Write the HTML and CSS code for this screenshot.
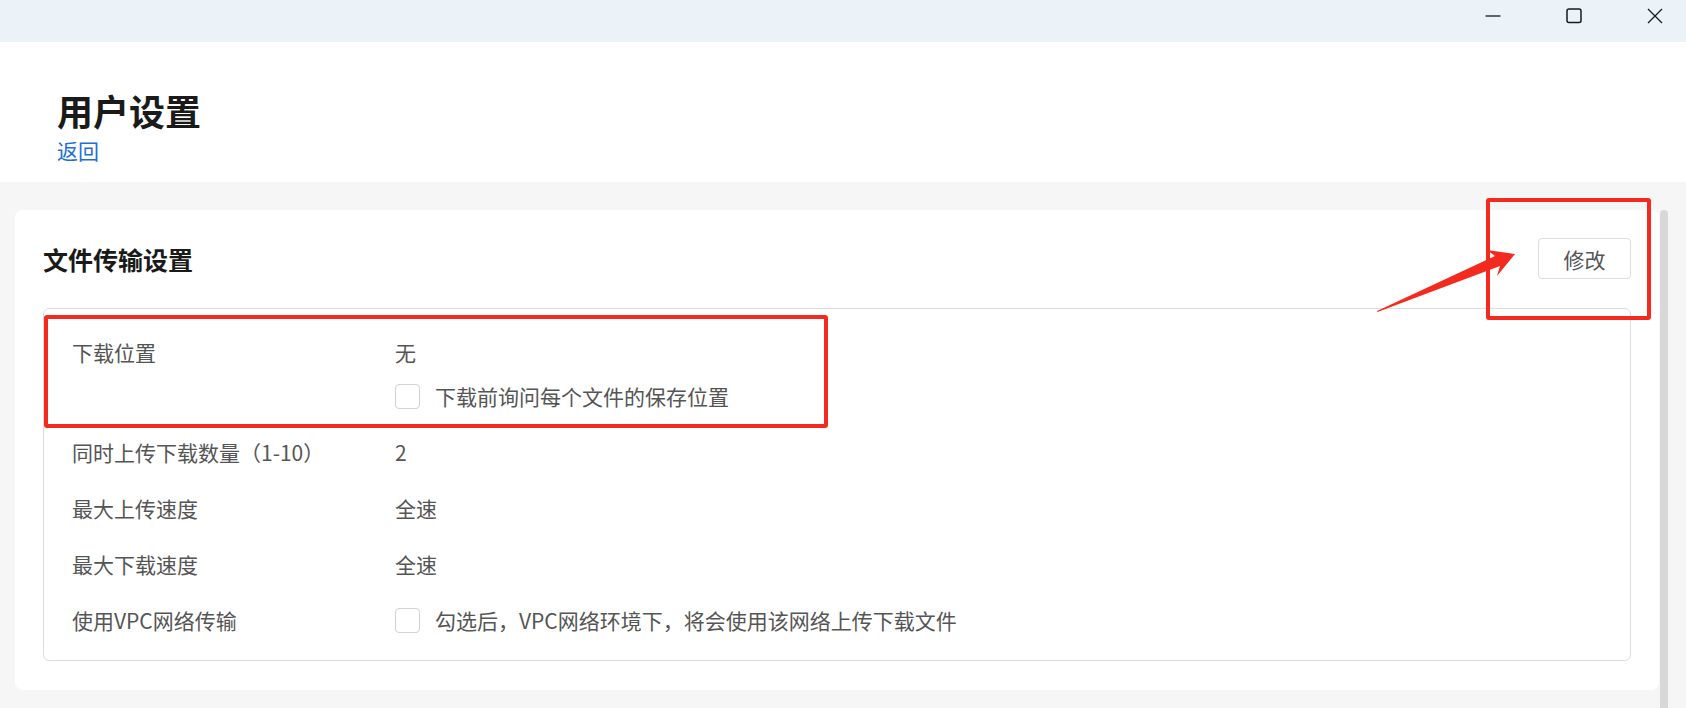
FILE: index.html
```html
<!DOCTYPE html>
<html lang="zh-CN">
<head>
<meta charset="utf-8">
<title>用户设置</title>
<link rel="stylesheet" href="styles.css">
</head>
<body>
<div class="titlebar">
  <div class="win-controls">
    <svg class="win-icon" width="16" height="16" viewBox="0 0 16 16"><path d="M0.5 8h15" stroke="#1a1a1a" stroke-width="1.3" fill="none"/></svg>
    <svg class="win-icon" width="16" height="16" viewBox="0 0 16 16"><rect x="1" y="1" width="14" height="13.5" rx="2" stroke="#1a1a1a" stroke-width="1.5" fill="none"/></svg>
    <svg class="win-icon" width="16" height="16" viewBox="0 0 16 16"><path d="M1 1l14 14M15 1L1 15" stroke="#1a1a1a" stroke-width="1.3" fill="none"/></svg>
  </div>
</div>
<header class="page-header">
  <h1 class="page-title">用户设置</h1>
  <a class="back-link">返回</a>
</header>
<div class="main">
  <div class="content">
    <section class="card">
      <div class="card-head">
        <h2 class="card-title">文件传输设置</h2>
        <button class="edit-btn">修改</button>
      </div>
      <div class="settings">
        <div class="row">
          <div class="label">下载位置</div>
          <div class="value">
            <div class="line">无</div>
            <div class="line check-line second"><span class="checkbox"></span>下载前询问每个文件的保存位置</div>
          </div>
        </div>
        <div class="row">
          <div class="label">同时上传下载数量（1-10）</div>
          <div class="value"><div class="line">2</div></div>
        </div>
        <div class="row">
          <div class="label">最大上传速度</div>
          <div class="value"><div class="line">全速</div></div>
        </div>
        <div class="row">
          <div class="label">最大下载速度</div>
          <div class="value"><div class="line">全速</div></div>
        </div>
        <div class="row">
          <div class="label">使用VPC网络传输</div>
          <div class="value"><div class="line check-line"><span class="checkbox"></span>勾选后，VPC网络环境下，将会使用该网络上传下载文件</div></div>
        </div>
      </div>
    </section>
  </div>
  <div class="scroll-track"><div class="scroll-thumb"></div></div>
</div>

<div class="mark mark-left"></div>
<div class="mark mark-right"></div>
<svg class="arrow" width="1686" height="708" viewBox="0 0 1686 708">
  <polygon points="1377,311 1377.5,312 1500,266 1497,276 1515,254 1487,250 1495,256" fill="#f52a1f"/>
</svg>
</body>
</html>
```

FILE: styles.css
```css
* { box-sizing: border-box; }
html, body { margin: 0; padding: 0; }
body {
  width: 1686px;
  height: 708px;
  overflow: hidden;
  position: relative;
  font-family: "Noto Sans CJK SC", "Microsoft YaHei", sans-serif;
  background: #f6f6f6;
  color: #555;
}
.titlebar {
  height: 42px;
  background: #ebf3f9;
  display: flex;
  justify-content: flex-end;
  align-items: flex-start;
}
.win-controls {
  display: flex;
  gap: 65px;
  padding-top: 8px;
  padding-right: 23px;
}
.win-icon { display: block; }
.page-header {
  background: #fff;
  height: 140px;
  padding: 46px 0 0 57px;
}
.page-title {
  margin: 0;
  font-size: 36px;
  line-height: 44px;
  font-weight: 700;
  color: #1a1a1a;
}
.back-link {
  display: block;
  margin-top: 4px;
  font-size: 21px;
  line-height: 28px;
  color: #1b6fd8;
}
.main {
  display: flex;
  height: 526px;
  background: #f6f6f6;
}
.content {
  flex: 1;
  padding: 28px 0 0 15px;
}
.card {
  background: #fff;
  border-radius: 8px;
  padding: 28px 28px 29px 28px;
}
.card-head {
  display: flex;
  justify-content: space-between;
  align-items: center;
  height: 41px;
}
.card-title {
  margin: 0;
  font-size: 25px;
  line-height: 32px;
  font-weight: 700;
  color: #1a1a1a;
}
.edit-btn {
  width: 93px;
  height: 41px;
  border: 1px solid #dcdcdc;
  border-radius: 4px;
  background: #fff;
  font-family: inherit;
  font-size: 21px;
  color: #555;
  padding: 0;
}
.settings {
  margin-top: 29px;
  border: 1px solid #dcdcdc;
  border-radius: 6px;
  padding: 27px 28px 24px 28px;
  display: flex;
  flex-direction: column;
  gap: 24px;
}
.row {
  display: grid;
  grid-template-columns: 323px 1fr;
  font-size: 21px;
  line-height: 32px;
  color: #555;
}
.line { height: 32px; }
.second { margin-top: 12px; }
.check-line {
  display: flex;
  align-items: center;
}
.checkbox {
  width: 25px;
  height: 25px;
  border: 1px solid #d2d2d2;
  border-radius: 4px;
  margin-right: 15px;
  background: #fff;
}
.scroll-track {
  width: 8px;
  margin-left: 1px;
  margin-right: 18px;
  padding-top: 28px;
  display: flex;
}
.scroll-thumb {
  flex: 1;
  background: #d8d8d8;
  border-radius: 4px 4px 0 0;
}
.mark {
  position: absolute;
  border: 4px solid #f52a1f;
  border-radius: 3px;
}
.mark-left {
  left: 44px;
  top: 315px;
  width: 784px;
  height: 113px;
}
.mark-right {
  left: 1486px;
  top: 198px;
  width: 165px;
  height: 122px;
}
.arrow {
  position: absolute;
  left: 0;
  top: 0;
}
```
